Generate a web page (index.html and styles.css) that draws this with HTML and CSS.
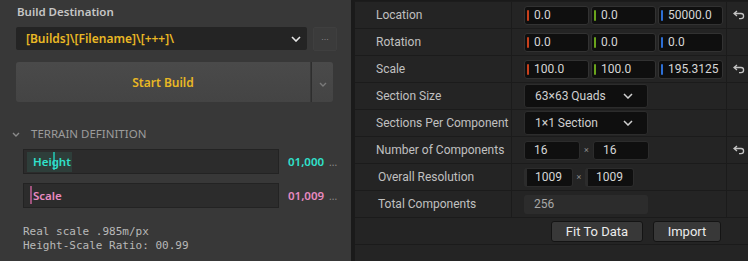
FILE: index.html
```html
<!DOCTYPE html>
<html lang="en">
  <head>
    <meta charset="UTF-8" />
    <meta name="viewport" content="width=device-width, initial-scale=1.0" />
    <title>Terrain Import</title>
    <link rel="stylesheet" href="styles.css">
  </head>
  <body>
    <div class="app">
      <aside class="build-panel">
        <div class="panel-title">Build Destination</div>

        <div class="path-row">
          <div class="path-select">
            <span class="path-text">[Builds]\[Filename]\[+++]\</span>
            <svg class="chev" width="10" height="6" viewBox="0 0 10 6"><path d="M1 1 L5 5 L9 1" fill="none" stroke="#e6e6e6" stroke-width="1.6"/></svg>
          </div>
          <button class="more-btn">...</button>
        </div>

        <div class="build-row">
          <button class="build-btn">Start Build</button>
          <button class="build-menu">
            <svg width="8" height="5" viewBox="0 0 8 5"><path d="M1 1 L4 4 L7 1" fill="none" stroke="#7a7a7a" stroke-width="1.4"/></svg>
          </button>
        </div>

        <div class="section-head">
          <svg width="8" height="5" viewBox="0 0 8 5"><path d="M1 1 L4 4 L7 1" fill="none" stroke="#8a8a8a" stroke-width="1.4"/></svg>
          <span>TERRAIN DEFINITION</span>
        </div>

        <div class="slider-row teal">
          <div class="slider">
            <span class="slider-fill"></span>
            <span class="slider-cursor" style="left: 29px"></span>
            <span class="slider-label">Height</span>
          </div>
          <span class="slider-value">01,000</span>
          <span class="slider-more">...</span>
        </div>

        <div class="slider-row pink">
          <div class="slider">
            <span class="slider-cursor" style="left: 6px"></span>
            <span class="slider-label">Scale</span>
          </div>
          <span class="slider-value">01,009</span>
          <span class="slider-more">...</span>
        </div>

        <pre class="readout">Real scale .985m/px
Height-Scale Ratio: 00.99</pre>
      </aside>

      <main class="details">
        <div class="row">
          <div class="label">Location</div>
          <div class="value">
            <div class="vec">
              <div class="num x">0.0</div>
              <div class="num y">0.0</div>
              <div class="num z">50000.0</div>
            </div>
          </div>
          <div class="reset">
            <svg width="12" height="10" viewBox="0 0 12 10"><path d="M4 1 L1 3.5 L4 6 M1 3.5 H8 A2.6 2.6 0 0 1 8 8.7 H6" fill="none" stroke="#c4c4c4" stroke-width="1.3"/></svg>
          </div>
        </div>

        <div class="row">
          <div class="label">Rotation</div>
          <div class="value">
            <div class="vec">
              <div class="num x">0.0</div>
              <div class="num y">0.0</div>
              <div class="num z">0.0</div>
            </div>
          </div>
          <div class="reset"></div>
        </div>

        <div class="row">
          <div class="label">Scale</div>
          <div class="value">
            <div class="vec">
              <div class="num x">100.0</div>
              <div class="num y">100.0</div>
              <div class="num z">195.3125</div>
            </div>
          </div>
          <div class="reset">
            <svg width="12" height="10" viewBox="0 0 12 10"><path d="M4 1 L1 3.5 L4 6 M1 3.5 H8 A2.6 2.6 0 0 1 8 8.7 H6" fill="none" stroke="#c4c4c4" stroke-width="1.3"/></svg>
          </div>
        </div>

        <div class="row">
          <div class="label">Section Size</div>
          <div class="value">
            <div class="combo">
              <span>63×63 Quads</span>
              <svg width="10" height="6" viewBox="0 0 10 6"><path d="M1 1 L5 5 L9 1" fill="none" stroke="#d0d0d0" stroke-width="1.5"/></svg>
            </div>
          </div>
          <div class="reset"></div>
        </div>

        <div class="row">
          <div class="label">Sections Per Component</div>
          <div class="value">
            <div class="combo">
              <span>1×1 Section</span>
              <svg width="10" height="6" viewBox="0 0 10 6"><path d="M1 1 L5 5 L9 1" fill="none" stroke="#d0d0d0" stroke-width="1.5"/></svg>
            </div>
          </div>
          <div class="reset"></div>
        </div>

        <div class="row">
          <div class="label">Number of Components</div>
          <div class="value">
            <div class="pair">
              <div class="int">16</div>
              <span class="times">×</span>
              <div class="int">16</div>
            </div>
          </div>
          <div class="reset">
            <svg width="12" height="10" viewBox="0 0 12 10"><path d="M4 1 L1 3.5 L4 6 M1 3.5 H8 A2.6 2.6 0 0 1 8 8.7 H6" fill="none" stroke="#c4c4c4" stroke-width="1.3"/></svg>
          </div>
        </div>

        <div class="row">
          <div class="label shifted">Overall Resolution</div>
          <div class="value">
            <div class="pair res">
              <div class="int">1009</div>
              <span class="times">×</span>
              <div class="int">1009</div>
            </div>
          </div>
          <div class="reset"></div>
        </div>

        <div class="row">
          <div class="label shifted">Total Components</div>
          <div class="value">
            <div class="readonly">256</div>
          </div>
          <div class="reset"></div>
        </div>

        <div class="row actions">
          <button class="btn fit">Fit To Data</button>
          <button class="btn import">Import</button>
        </div>
      </main>
    </div>
  </body>
</html>
```

FILE: styles.css
```css
body {
  margin: 0;
  background-color: #1a1a1a;
  font-family: Roboto, "Liberation Sans", sans-serif;
}

.app {
  display: flex;
  width: 748px;
  height: 261px;
  overflow: hidden;
}

/* left: build panel */

.build-panel {
  width: 351px;
  flex: none;
  background-color: #383838;
  font-family: "Noto Sans", "Open Sans", sans-serif;
  box-sizing: border-box;
  padding: 3px 0 0 16px;
}

.panel-title {
  color: #c6c6c6;
  font-size: 11.5px;
  font-weight: 600;
  line-height: 18px;
  padding-left: 1px;
}

.path-row {
  display: flex;
  gap: 6px;
  margin-top: 6px;
  height: 23px;
}

.path-select {
  width: 291px;
  background-color: #242424;
  border-radius: 2px;
  display: flex;
  align-items: center;
  justify-content: space-between;
  padding: 0 6px 0 10px;
  box-sizing: border-box;
}

.path-text {
  color: #e9b824;
  font-size: 12px;
  font-weight: 600;
}

.more-btn {
  width: 24px;
  height: 24px;
  background-color: #3b3b3b;
  border: 1px solid #3f3f3f;
  border-radius: 2px;
  color: #858585;
  font-size: 9px;
  padding: 0 0 4px;
  line-height: 1;
}

.build-row {
  display: flex;
  margin-top: 12px;
  height: 40px;
  width: 317px;
}

.build-btn {
  flex: 1;
  background: linear-gradient(#4a4a4a, #444444);
  border: none;
  border-radius: 3px 0 0 3px;
  color: #e9b824;
  font-family: "Noto Sans", "Open Sans", sans-serif;
  font-size: 12px;
  font-weight: 600;
}

.build-menu {
  width: 22px;
  margin-left: 1px;
  background: linear-gradient(#4a4a4a, #444444);
  border: none;
  border-left: 1px solid #2e2e2e;
  border-radius: 0 3px 3px 0;
  padding: 0;
}

.section-head {
  display: flex;
  align-items: center;
  gap: 11px;
  margin-top: 24px;
  color: #9c9c9c;
  font-size: 11.5px;
  line-height: 16px;
}

.section-head svg {
  margin-left: -4px;
}

.slider-row {
  display: flex;
  align-items: center;
  margin-top: 7px;
  margin-left: 7px;
}

.slider-row + .slider-row {
  margin-top: 9px;
}

.slider {
  position: relative;
  width: 256px;
  height: 25px;
  background-color: #2c2c2c;
  border: 1px solid #232323;
  box-sizing: border-box;
  display: flex;
  align-items: center;
}

.slider-fill {
  position: absolute;
  left: 3px;
  top: 2px;
  bottom: 1px;
  width: 45px;
  background-color: #2e3e3a;
}

.slider-cursor {
  position: absolute;
  top: 2px;
  bottom: 3px;
  width: 2px;
}

.slider-label {
  position: relative;
  padding-left: 9px;
  font-size: 11.5px;
  font-weight: 600;
}

.slider-value {
  margin-left: 9px;
  font-size: 11.5px;
  font-weight: 600;
}

.slider-more {
  margin-left: 5px;
  color: #8c8c8c;
  font-size: 10px;
}

.teal .slider-label,
.teal .slider-value {
  color: #30e2cc;
}

.teal .slider-cursor {
  background-color: #25a898;
}

.pink .slider-label,
.pink .slider-value {
  color: #e88ac0;
}

.pink .slider-cursor {
  background-color: #a0537c;
}

.readout {
  margin: 17px 0 0 7px;
  color: #b8b8b8;
  font-family: "DejaVu Sans Mono", monospace;
  font-size: 11px;
  line-height: 14px;
}

/* right: details panel */

.details {
  flex: 1;
  background-color: #242424;
  border-left: 4px solid #1a1a1a;
  border-top: 1px solid #1c1c1c;
  margin-top: 1px;
}

.row {
  display: grid;
  grid-template-columns: 157px 215px 1fr;
  height: 26px;
  border-bottom: 1px solid #1b1b1b;
}

.label {
  display: flex;
  align-items: center;
  padding-left: 21px;
  color: #c0c0c0;
  font-size: 12px;
  border-right: 1px solid #1b1b1b;
}

.label.shifted {
  padding-left: 23px;
}

.value {
  display: flex;
  align-items: center;
  padding-left: 12px;
  border-right: 1px solid #1b1b1b;
}

.reset {
  display: flex;
  align-items: center;
  justify-content: center;
  padding-left: 2px;
}

.vec {
  display: flex;
  gap: 2px;
}

.num {
  position: relative;
  width: 65px;
  height: 19px;
  box-sizing: border-box;
  background-color: #0f0f0f;
  border: 1px solid #323232;
  border-radius: 3px;
  color: #d6d6d6;
  font-size: 12px;
  line-height: 17px;
  padding-left: 9px;
}

.num::before {
  content: "";
  position: absolute;
  left: 2px;
  top: 3px;
  bottom: 3px;
  width: 2px;
  border-radius: 1px;
}

.num.x::before {
  background-color: #c8401c;
}

.num.y::before {
  background-color: #6aa51c;
}

.num.z::before {
  background-color: #2d6fd6;
}

.combo {
  width: 124px;
  height: 24px;
  box-sizing: border-box;
  background-color: #0f0f0f;
  border: 1px solid #2c2c2c;
  border-radius: 3px;
  display: flex;
  align-items: center;
  justify-content: space-between;
  padding: 0 14px 0 10px;
  color: #d0d0d0;
  font-size: 12px;
}

.pair {
  display: flex;
  align-items: center;
}

.int {
  width: 56px;
  height: 19px;
  box-sizing: border-box;
  background-color: #0f0f0f;
  border: 1px solid #2c2c2c;
  border-radius: 3px;
  color: #d6d6d6;
  font-size: 12px;
  line-height: 17px;
  padding-left: 9px;
}

.times {
  width: 13px;
  text-align: center;
  color: #8a8a8a;
  font-size: 9px;
}

.pair.res .int {
  width: 49px;
  padding-left: 8px;
  border-left: 3px solid #2c2c2c;
}

.pair.res .times {
  width: 12px;
}

.readonly {
  width: 124px;
  height: 19px;
  box-sizing: border-box;
  background-color: #2c2c2c;
  border-radius: 3px;
  color: #a8a8a8;
  font-size: 12px;
  line-height: 18px;
  padding-left: 10px;
  margin-top: 1px;
}

.actions {
  display: flex;
  justify-content: flex-end;
  align-items: center;
  gap: 10px;
  padding-right: 27px;
}

.btn {
  height: 21px;
  background-color: #383838;
  border: 1px solid #141414;
  border-radius: 3px;
  color: #ececec;
  font-family: Roboto, "Liberation Sans", sans-serif;
  font-size: 13px;
  padding: 0;
}

.btn.fit {
  width: 92px;
}

.btn.import {
  width: 68px;
}
```
